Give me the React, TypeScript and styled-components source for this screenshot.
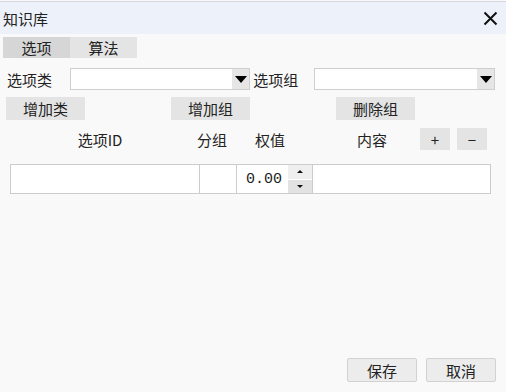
import styled, { createGlobalStyle } from "styled-components";

const Global = createGlobalStyle`
body {
  margin: 0;
  background: #f9f9f9;
  font-family: "Noto Sans CJK SC", "Liberation Sans", sans-serif;
  font-size: 15px;
  color: #222;
}
`

const Janela = styled.div`
width: 506px;
height: 392px;
display: flex;
flex-direction: column;
background: #f9f9f9;
box-sizing: border-box;
`

const BarraTitulo = styled.div`
height: 33px;
margin-top: 1px;
border-top: 1px solid #d4d8de;
background: #edf2fa;
display: flex;
align-items: center;
justify-content: space-between;
padding: 0 8px 0 3px;
box-sizing: border-box;
`

const Titulo = styled.span`
font-size: 15px;
line-height: 1;
`

const Fechar = styled.span`
display: flex;
`

const Abas = styled.div`
display: flex;
margin-top: 3px;
padding-left: 3px;
height: 21px;
`

const Aba = styled.div<{ $ativa?: boolean }>`
width: 67px;
height: 21px;
display: flex;
align-items: center;
justify-content: center;
background: ${p => (p.$ativa ? "#d6d6d6" : "#e4e4e4")};
line-height: 1;
`

const Linha = styled.div<{ $topo: number; $esq: number; $gap?: number }>`
display: flex;
align-items: center;
margin-top: ${p => p.$topo}px;
padding-left: ${p => p.$esq}px;
gap: ${p => p.$gap ?? 0}px;
`

const Rotulo = styled.span<{ $largura: number }>`
width: ${p => p.$largura}px;
line-height: 1;
`

const Combo = styled.div<{ $largura: number }>`
width: ${p => p.$largura}px;
height: 22px;
box-sizing: border-box;
border: 1px solid #cfcfcf;
background: #fff;
display: flex;
justify-content: flex-end;
`

const Seta = styled.div`
width: 17px;
background: #e6e6e6;
display: flex;
align-items: center;
justify-content: center;
&::after {
  content: "";
  border-left: 6px solid transparent;
  border-right: 6px solid transparent;
  border-top: 7px solid #000;
}
`

const BotaoCinza = styled.div<{ $largura: number; $altura: number }>`
width: ${p => p.$largura}px;
height: ${p => p.$altura}px;
background: #e4e4e4;
display: flex;
align-items: center;
justify-content: center;
line-height: 1;
`

const Cabecalho = styled.span<{ $largura: number }>`
width: ${p => p.$largura}px;
text-align: center;
line-height: 1;
`

const Tabela = styled.div`
margin: 14px 0 0 10px;
width: 481px;
height: 30px;
display: flex;
box-sizing: border-box;
border: 1px solid #cccccc;
background: #fff;
`

const Celula = styled.div<{ $largura: number }>`
width: ${p => p.$largura}px;
height: 100%;
border-right: 1px solid #cccccc;
box-sizing: border-box;
&:last-child { border-right: none; flex: 1; }
`

const Giro = styled.div`
width: 76px;
height: 100%;
display: flex;
border-right: 1px solid #cccccc;
box-sizing: border-box;
`

const Valor = styled.div`
flex: 1;
display: flex;
align-items: center;
padding-left: 9px;
font-family: "Liberation Mono", "DejaVu Sans Mono", monospace;
font-size: 15px;
`

const Botoes = styled.div`
width: 24px;
display: flex;
flex-direction: column;
`

const Passo = styled.div<{ $baixo?: boolean }>`
flex: 1;
background: ${p => (p.$baixo ? "#e2e2e2" : "#efefef")};
border-top: ${p => (p.$baixo ? "1px solid #fff" : "none")};
display: flex;
align-items: center;
justify-content: center;
&::after {
  content: "";
  border-left: 3px solid transparent;
  border-right: 3px solid transparent;
  ${p => (p.$baixo ? "border-top: 3px solid #111;" : "border-bottom: 3px solid #111;")}
}
`

const Espaco = styled.div`
flex: 1;
`

const Rodape = styled.div`
display: flex;
justify-content: flex-end;
gap: 9px;
padding: 0 10px 10px 0;
`

const BotaoRodape = styled.div`
width: 70px;
height: 24px;
box-sizing: border-box;
background: #ececec;
border: 1px solid #d2d2d2;
border-radius: 2px;
display: flex;
align-items: center;
justify-content: center;
font-size: 15px;
line-height: 1;
`

export default function App() {
  return (
    <Janela>
      <Global />
      <BarraTitulo>
        <Titulo>知识库</Titulo>
        <Fechar>
          <svg width="15" height="15" viewBox="0 0 15 15">
            <path d="M1.5 1.5 L13.5 13.5 M13.5 1.5 L1.5 13.5" stroke="#111" strokeWidth="2" />
          </svg>
        </Fechar>
      </BarraTitulo>
      <Abas>
        <Aba $ativa>选项</Aba>
        <Aba>算法</Aba>
      </Abas>
      <Linha $topo={10} $esq={7}>
        <Rotulo $largura={63}>选项类</Rotulo>
        <Combo $largura={180}><Seta /></Combo>
        <Rotulo $largura={64}>&nbsp;选项组</Rotulo>
        <Combo $largura={181}><Seta /></Combo>
      </Linha>
      <Linha $topo={7} $esq={6} $gap={86}>
        <BotaoCinza $largura={79} $altura={23}>增加类</BotaoCinza>
        <BotaoCinza $largura={79} $altura={23}>增加组</BotaoCinza>
        <BotaoCinza $largura={79} $altura={23}>删除组</BotaoCinza>
      </Linha>
      <Linha $topo={8} $esq={10}>
        <Cabecalho $largura={180}>选项ID</Cabecalho>
        <Cabecalho $largura={44}>分组</Cabecalho>
        <Cabecalho $largura={16} />
        <Cabecalho $largura={40}>权值</Cabecalho>
        <Cabecalho $largura={50} />
        <Cabecalho $largura={64}>内容</Cabecalho>
        <Cabecalho $largura={16} />
        <BotaoCinza $largura={30} $altura={22}>+</BotaoCinza>
        <Cabecalho $largura={7} />
        <BotaoCinza $largura={30} $altura={22}>−</BotaoCinza>
      </Linha>
      <Tabela>
        <Celula $largura={189} />
        <Celula $largura={37} />
        <Giro>
          <Valor>0.00</Valor>
          <Botoes>
            <Passo />
            <Passo $baixo />
          </Botoes>
        </Giro>
        <Celula $largura={0} />
      </Tabela>
      <Espaco />
      <Rodape>
        <BotaoRodape>保存</BotaoRodape>
        <BotaoRodape>取消</BotaoRodape>
      </Rodape>
    </Janela>
  )
}
